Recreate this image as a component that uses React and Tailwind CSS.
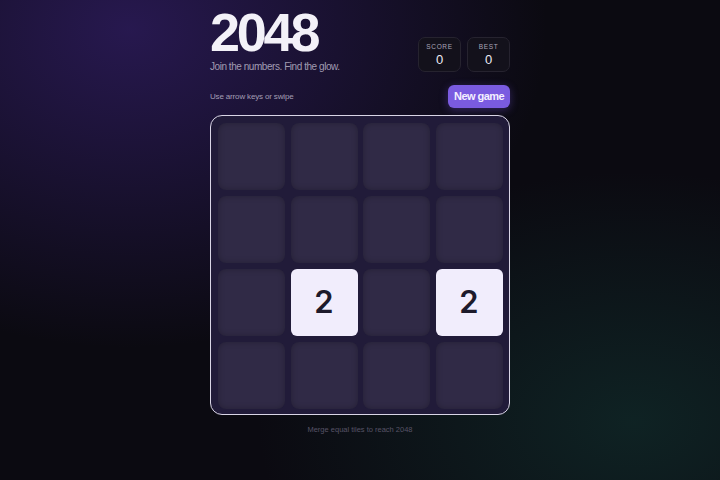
import React, { useState } from 'react';

const START = [
  [0, 0, 0, 0],
  [0, 0, 0, 0],
  [0, 2, 0, 2],
  [0, 0, 0, 0],
];

const Tile = ({ value }) => {
  if (!value) {
    return <div className="h-[67px] w-[67px] rounded-[8px] bg-[#302a46] shadow-[inset_0_0_6px_rgba(0,0,0,0.25)]" />;
  }
  return (
    <div className="flex h-[67px] w-[67px] items-center justify-center rounded-[6px] bg-[#f1edfc] font-['Inter',sans-serif] text-[31px] font-semibold text-[#1d1a2b]">
      {value}
    </div>
  );
};

const ScoreBox = ({ label, value }) => (
  <div className="flex h-[35px] w-[43px] flex-col items-center justify-center rounded-[7px] border border-[#26232f] bg-[#13111b]">
    <span className="text-[6.5px] uppercase tracking-[0.1em] text-[#a9a4b8]">{label}</span>
    <span className="text-[13px] leading-[15px] text-[#eceaf4]">{value}</span>
  </div>
);

export default function App() {
  const [board] = useState(START);
  const [score] = useState(0);
  const [best] = useState(0);

  return (
    <div className="h-[480px] w-[720px] overflow-hidden bg-[#0b0a11] bg-[radial-gradient(ellipse_at_18%_6%,rgba(62,36,130,0.55),transparent_50%),radial-gradient(ellipse_at_88%_88%,rgba(22,80,70,0.35),transparent_42%)] font-['Liberation_Sans',sans-serif]">
      <div className="mx-auto flex w-[300px] flex-col pt-[3px]">
        <div className="flex items-end justify-between">
          <div className="flex flex-col">
            <h1 className="text-[54px] font-bold leading-[58px] tracking-[-0.06em] text-[#f3f1f8]">2048</h1>
            <p className="text-[10px] leading-[12px] tracking-[-0.045em] text-[#a19cb2]">Join the numbers. Find the glow.</p>
          </div>
          <div className="mb-[1px] flex gap-[6px]">
            <ScoreBox label="Score" value={score} />
            <ScoreBox label="Best" value={best} />
          </div>
        </div>

        <div className="mt-[12px] flex items-center justify-between">
          <span className="text-[8px] tracking-[-0.02em] text-[#a39eb4]">Use arrow keys or swipe</span>
          <button
            type="button"
            className="h-[23px] rounded-[6px] bg-[#7a5be0] px-[6px] text-[11px] font-bold tracking-[-0.05em] text-[#f4f0ff] shadow-[0_2px_8px_rgba(120,90,230,0.35)]"
          >
            New game
          </button>
        </div>

        <div className="mt-[7px] h-[300px] w-[300px] rounded-[12px] border border-[#d9d5e6] bg-[#211b39] p-[7px]">
          <div className="grid grid-cols-4 gap-[6px]">
            {board.flat().map((v, i) => (
              <Tile key={i} value={v} />
            ))}
          </div>
        </div>

        <p className="mt-[9px] text-center text-[7.5px] text-[#575366]">Merge equal tiles to reach 2048</p>
      </div>
    </div>
  );
}
